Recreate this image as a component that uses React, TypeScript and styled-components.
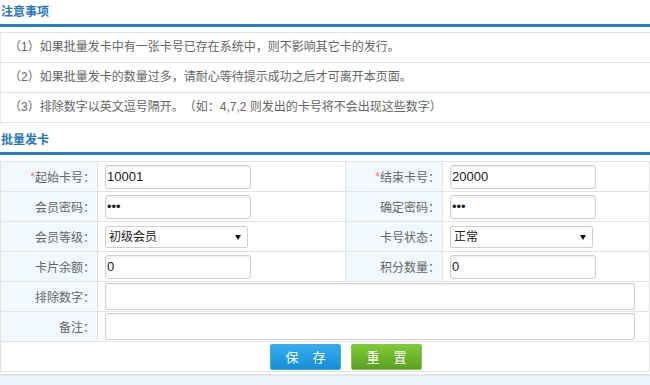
import styled, { createGlobalStyle } from "styled-components";

const GlobalStyle = createGlobalStyle`
  html, body {
    margin: 0;
    padding: 0;
    background: #fff;
    font-family: "Liberation Sans", "Noto Sans CJK SC", sans-serif;
    font-size: 12px;
    overflow: hidden;
  }
`;

const Page = styled.div`
  width: 650px;
  height: 385px;
  overflow: hidden;
`;

const SectionTitle = styled.h3<{ $gap?: number }>`
  margin: ${(p) => p.$gap ?? 0}px 0 0;
  height: 24px;
  line-height: 24px;
  padding-left: 1px;
  font-size: 12px;
  font-weight: bold;
  color: #2a78b8;
  border-bottom: 3px solid #2b7cbf;
`;

const NoticeList = styled.ul`
  margin: 5px 0 0;
  padding: 0;
  list-style: none;
  border-top: 1px solid #e4e4e4;
  border-left: 1px solid #e8e8e8;
`;

const NoticeItem = styled.li`
  height: 29px;
  line-height: 29px;
  padding-left: 8px;
  color: #666;
  font-size: 12px;
  border-bottom: 1px solid #e4e4e4;
  white-space: nowrap;
`;

/* full-width punctuation kept at full width, as in the original */
const Wide = styled.span`
  display: inline-block;
  width: 12px;
  text-align: center;
`;

const FormGrid = styled.div`
  margin-top: 6px;
  display: grid;
  grid-template-columns: 96px 247px 96px 1fr;
  grid-auto-rows: 29px;
  gap: 1px;
  background: #e3e3e3;
  border: 1px solid #e3e3e3;
`;

const Label = styled.div`
  background: #f1f8fe;
  display: flex;
  align-items: center;
  justify-content: flex-end;
  padding-right: 2px;
  color: #666;
  font-size: 12px;
  white-space: nowrap;
`;

const Required = styled.span`
  color: #f0786a;
`;

const Field = styled.div<{ $wide?: boolean }>`
  background: #fff;
  display: flex;
  align-items: center;
  padding-left: 7px;
  grid-column: ${(p) => (p.$wide ? "2 / -1" : "auto")};
`;

const TextInput = styled.input`
  box-sizing: border-box;
  width: 146px;
  height: 24px;
  padding: 0 1px;
  border: 1px solid #cfcfcf;
  border-radius: 3px;
  box-shadow: inset 0 1px 2px rgba(0, 0, 0, 0.08);
  font-family: "Liberation Sans", "Noto Sans CJK SC", sans-serif;
  font-size: 13px;
  color: #222;
  outline: none;
`;

const SelectWrap = styled.span`
  position: relative;
  display: inline-block;

  &::after {
    content: "";
    position: absolute;
    right: 7px;
    top: 9px;
    border-left: 3px solid transparent;
    border-right: 3px solid transparent;
    border-top: 5px solid #111;
    pointer-events: none;
  }
`;

const Select = styled.select`
  box-sizing: border-box;
  appearance: none;
  width: 143px;
  height: 22px;
  padding: 0 3px;
  border: 1px solid #cfcfcf;
  border-radius: 2px;
  background: #fff;
  font-family: "Liberation Sans", "Noto Sans CJK SC", sans-serif;
  font-size: 12px;
  color: #222;
  outline: none;
`;

const TextArea = styled.textarea`
  box-sizing: border-box;
  width: 530px;
  height: 27px;
  padding: 1px;
  border: 1px solid #cfcfcf;
  border-radius: 2px;
  box-shadow: inset 0 1px 2px rgba(0, 0, 0, 0.06);
  resize: none;
  font-family: "Liberation Sans", "Noto Sans CJK SC", sans-serif;
  font-size: 12px;
  outline: none;
`;

const ButtonRow = styled.div`
  grid-column: 1 / -1;
  background: #fff;
  display: flex;
  align-items: center;
  justify-content: center;
  gap: 10px;
  padding-left: 42px;
`;

const Button = styled.button<{ $tone: "blue" | "green" }>`
  box-sizing: border-box;
  width: 71px;
  height: 26px;
  padding: 0;
  border-radius: 2px;
  border: 1px solid ${(p) => (p.$tone === "blue" ? "#4aa8e0" : "#86c154")};
  background: ${(p) =>
    p.$tone === "blue"
      ? "linear-gradient(#34adf0, #168fd8)"
      : "linear-gradient(#7ecb32, #5c9f22)"};
  color: #fff;
  font-family: "Noto Sans CJK SC", sans-serif;
  font-size: 13px;
  word-spacing: 11px;
  cursor: pointer;
`;

const Footer = styled.div`
  margin-top: 2px;
  height: 12px;
  border-top: 2px solid #e6e6e6;
  background: #eef6fd;
`;

const Colon = () => <Wide>：</Wide>;

function FieldLabel({ text, required }: { text: string; required?: boolean }) {
  return (
    <Label>
      {required && <Required>*</Required>}
      {text}
      <Colon />
    </Label>
  );
}

export default function App() {
  return (
    <Page>
      <GlobalStyle />
      <SectionTitle>注意事项</SectionTitle>
      <NoticeList>
        <NoticeItem>
          <Wide>（</Wide>1<Wide>）</Wide>如果批量发卡中有一张卡号已存在系统中<Wide>，</Wide>
          则不影响其它卡的发行<Wide>。</Wide>
        </NoticeItem>
        <NoticeItem>
          <Wide>（</Wide>2<Wide>）</Wide>如果批量发卡的数量过多<Wide>，</Wide>
          请耐心等待提示成功之后才可离开本页面<Wide>。</Wide>
        </NoticeItem>
        <NoticeItem>
          <Wide>（</Wide>3<Wide>）</Wide>排除数字以英文逗号隔开<Wide>。</Wide>
          <Wide>（</Wide>如<Wide>：</Wide>4,7,2 则发出的卡号将不会出现这些数字<Wide>）</Wide>
        </NoticeItem>
      </NoticeList>

      <SectionTitle $gap={5}>批量发卡</SectionTitle>
      <FormGrid>
        <FieldLabel text="起始卡号" required />
        <Field>
          <TextInput defaultValue="10001" />
        </Field>
        <FieldLabel text="结束卡号" required />
        <Field>
          <TextInput defaultValue="20000" />
        </Field>

        <FieldLabel text="会员密码" />
        <Field>
          <TextInput type="password" defaultValue="123" />
        </Field>
        <FieldLabel text="确定密码" />
        <Field>
          <TextInput type="password" defaultValue="123" />
        </Field>

        <FieldLabel text="会员等级" />
        <Field>
          <SelectWrap>
            <Select defaultValue="1">
              <option value="1">初级会员</option>
              <option value="2">中级会员</option>
              <option value="3">高级会员</option>
            </Select>
          </SelectWrap>
        </Field>
        <FieldLabel text="卡号状态" />
        <Field>
          <SelectWrap>
            <Select defaultValue="normal">
              <option value="normal">正常</option>
              <option value="locked">锁定</option>
            </Select>
          </SelectWrap>
        </Field>

        <FieldLabel text="卡片余额" />
        <Field>
          <TextInput defaultValue="0" />
        </Field>
        <FieldLabel text="积分数量" />
        <Field>
          <TextInput defaultValue="0" />
        </Field>

        <FieldLabel text="排除数字" />
        <Field $wide>
          <TextArea autoFocus />
        </Field>

        <FieldLabel text="备注" />
        <Field $wide>
          <TextArea />
        </Field>

        <ButtonRow>
          <Button $tone="blue">保 存</Button>
          <Button $tone="green">重 置</Button>
        </ButtonRow>
      </FormGrid>
      <Footer />
    </Page>
  );
}
